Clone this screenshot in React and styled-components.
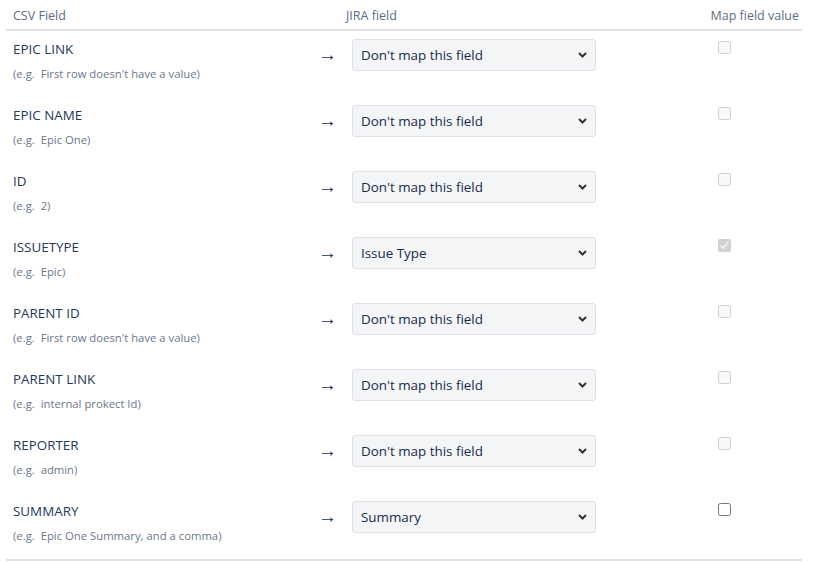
import React from "react";
import styled, { createGlobalStyle } from "styled-components";

const Global = createGlobalStyle`
  html, body { margin: 0; padding: 0; background: #fff; }
  body { font-family: "Open Sans", "Noto Sans", sans-serif; color: #172b4d; }
  * { box-sizing: border-box; }
`;

const Page = styled.div`
  padding: 0 28px 0 6px;
  width: 830px;
`;

const Table = styled.div`
  display: flex;
  flex-direction: column;
  border-bottom: 2px solid #dfe1e6;
`;

const Grid = styled.div`
  display: grid;
  grid-template-columns: 333px 357px 1fr;
`;

const HeaderRow = styled(Grid)`
  border-bottom: 2px solid #dfe1e6;
  height: 31px;
  align-items: start;
`;

const HeaderCell = styled.div`
  padding: 8px 7px 0;
  font-size: 12.5px;
  line-height: 16px;
  font-weight: 400;
  color: #5e6c84;
  text-align: ${(p) => (p.$right ? "right" : "left")};
  padding-right: ${(p) => (p.$right ? "3px" : "7px")};
`;

const Row = styled(Grid)`
  height: 66px;
  padding-top: 8px;
  align-items: start;
`;

const FieldCell = styled.div`
  display: flex;
  align-items: flex-start;
  padding-left: 7px;
`;

const Label = styled.div`
  flex: 1;
  display: flex;
  flex-direction: column;
  gap: 7px;
`;

const Title = styled.div`
  font-size: 13.4px;
  line-height: 20px;
  color: #253858;
`;

const Example = styled.div`
  font-size: 11.3px;
  line-height: 16px;
  color: #6b778c;
`;

const Arrow = styled.span`
  height: 32px;
  line-height: 32px;
  font-family: "Liberation Sans", Arial, sans-serif;
  font-size: 19px;
  color: #172b4d;
  margin-right: 2px;
`;

const SelectCell = styled.div`
  padding-left: 13px;
`;

const SelectWrap = styled.div`
  position: relative;
  width: 244px;
`;

const Select = styled.select`
  appearance: none;
  -webkit-appearance: none;
  width: 244px;
  height: 32px;
  padding: 0 28px 0 8px;
  background: #f4f5f7;
  border: 1px solid #dfe1e6;
  border-radius: 3px;
  font-family: "Open Sans", "Noto Sans", sans-serif;
  font-size: 13.4px;
  color: #172b4d;
  outline: none;
`;

const Chevron = styled.svg`
  position: absolute;
  right: 9px;
  top: 13px;
  pointer-events: none;
`;

const CheckCell = styled.div`
  padding-left: 22px;
  padding-top: 2px;
`;

const Check = styled.input`
  margin: 0;
  width: 13px;
  height: 13px;
  display: block;
`;

const rows = [
  { name: "EPIC LINK", ex: "First row doesn't have a value", value: "none" },
  { name: "EPIC NAME", ex: "Epic One", value: "none" },
  { name: "ID", ex: "2", value: "none" },
  { name: "ISSUETYPE", ex: "Epic", value: "issuetype", checked: true },
  { name: "PARENT ID", ex: "First row doesn't have a value", value: "none" },
  { name: "PARENT LINK", ex: "internal prokect Id", value: "none" },
  { name: "REPORTER", ex: "admin", value: "none" },
  { name: "SUMMARY", ex: "Epic One Summary, and a comma", value: "summary", enabled: true },
];

export default function App() {
  return (
    <Page>
      <Global />
      <Table>
        <HeaderRow>
          <HeaderCell>CSV Field</HeaderCell>
          <HeaderCell>JIRA field</HeaderCell>
          <HeaderCell $right>Map field value</HeaderCell>
        </HeaderRow>
        {rows.map((r) => (
          <Row key={r.name}>
            <FieldCell>
              <Label>
                <Title>{r.name}</Title>
                <Example>(e.g.&nbsp; {r.ex})</Example>
              </Label>
              <Arrow>→</Arrow>
            </FieldCell>
            <SelectCell>
              <SelectWrap>
                <Select defaultValue={r.value}>
                  <option value="none">Don't map this field</option>
                  <option value="issuetype">Issue Type</option>
                  <option value="summary">Summary</option>
                </Select>
                <Chevron width="9" height="6" viewBox="0 0 9 6">
                  <path d="M1 1 L4.5 4.5 L8 1" fill="none" stroke="#333" strokeWidth="2" />
                </Chevron>
              </SelectWrap>
            </SelectCell>
            <CheckCell>
              <Check
                type="checkbox"
                defaultChecked={!!r.checked}
                disabled={!r.enabled}
              />
            </CheckCell>
          </Row>
        ))}
      </Table>
    </Page>
  );
}
